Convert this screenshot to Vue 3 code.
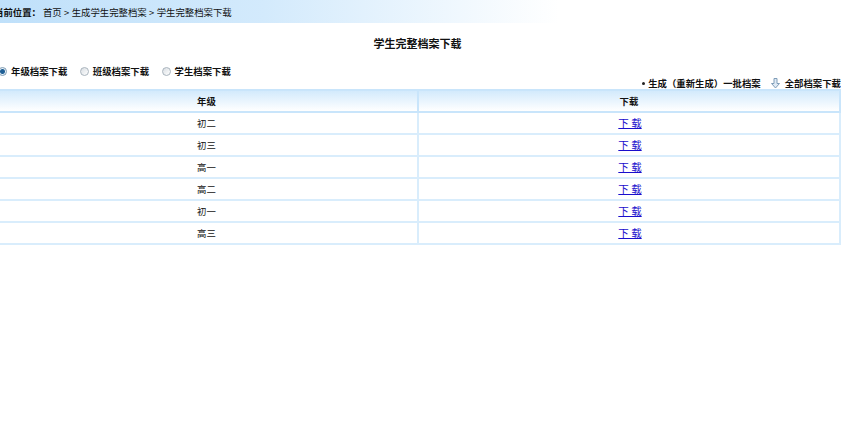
<template>
  <div class="page">
    <div class="crumb">
      <b>当前位置：</b>
      <span class="path">首页 &gt; 生成学生完整档案 &gt; 学生完整档案下载</span>
    </div>

    <h1 class="title">学生完整档案下载</h1>

    <div class="radios">
      <label v-for="(item, index) in types" :key="item" class="radio">
        <input type="radio" name="type" :checked="index === 0" />
        <span>{{ item }}</span>
      </label>
    </div>

    <div class="actions">
      <span class="action"><i class="dot"></i>生成（重新生成）一批档案</span>
      <span class="action all">
        <svg width="9" height="11" viewBox="0 0 9 11">
          <path d="M3 .5h3v5h2.500L4.500 10 .5 5.500H3z" fill="#dfeaf5" stroke="#7f9db8" />
        </svg>
        全部档案下载
      </span>
    </div>

    <table class="list">
      <thead>
        <tr>
          <th>年级</th>
          <th>下载</th>
        </tr>
      </thead>
      <tbody>
        <tr v-for="grade in grades" :key="grade">
          <td>{{ grade }}</td>
          <td><a href="#">下 载</a></td>
        </tr>
      </tbody>
    </table>
  </div>
</template>

<script setup>
const types = ['年级档案下载', '班级档案下载', '学生档案下载'];
const grades = ['初二', '初三', '高一', '高二', '初一', '高三'];
</script>

<style>
html,
body {
  overflow: hidden;
  background: #fff;
}
</style>

<style scoped>
.page {
  width: 847px;
  height: 440px;
  margin-left: -6px;
  font-family: "Noto Sans CJK SC", sans-serif;
  font-size: 9.4px;
  color: #111;
  overflow: hidden;
}

.crumb {
  display: flex;
  align-items: center;
  height: 23px;
  background: linear-gradient(to right, #bfe0fa 0, #d3eafc 270px, #fff 565px);
  white-space: nowrap;
}

.path {
  margin-left: 2px;
  word-spacing: 0.3px;
}

.title {
  margin: 13px 0 0;
  height: 14px;
  line-height: 14px;
  font-size: 11px;
  text-align: center;
}

.radios {
  display: flex;
  margin-top: 14px;
  padding-left: 4px;
  height: 14px;
  align-items: center;
  font-weight: bold;
}

.radio {
  display: flex;
  align-items: center;
  gap: 4px;
  margin-right: 12.5px;
}

.radio input {
  appearance: none;
  width: 9px;
  height: 9px;
  margin: 0;
  border: 1px solid #a9b4bd;
  border-radius: 50%;
  background: linear-gradient(135deg, #d9dee3, #fff);
}

.radio input:checked {
  background: radial-gradient(circle, #1f5f95 0 2px, #eaf2f8 3px);
  border-color: #7d9ab2;
}

.actions {
  display: flex;
  justify-content: flex-end;
  gap: 10px;
  height: 11px;
  line-height: 11px;
  font-weight: bold;
}

.action {
  display: flex;
  align-items: center;
  gap: 3px;
}

.action.all {
  gap: 5px;
}

.dot {
  width: 3px;
  height: 3px;
  border-radius: 50%;
  background: #222;
}

.list {
  width: 847px;
  border-collapse: collapse;
  table-layout: fixed;
}

.list th,
.list td {
  height: 20px;
  padding: 0;
  border: 2px solid #d9edfc;
  text-align: center;
  font-size: 9.4px;
}

.list th {
  border-color: #c9e5fb;
  background: linear-gradient(to bottom, #d3eafc 0, #fff 100%);
}

.list th:first-child,
.list td:first-child {
  width: 421px;
}

.list a {
  display: inline-block;
  margin: -2px 0 0 2px;
  line-height: 14px;
  color: #1a0dcc;
  font-size: 10.5px;
}
</style>
